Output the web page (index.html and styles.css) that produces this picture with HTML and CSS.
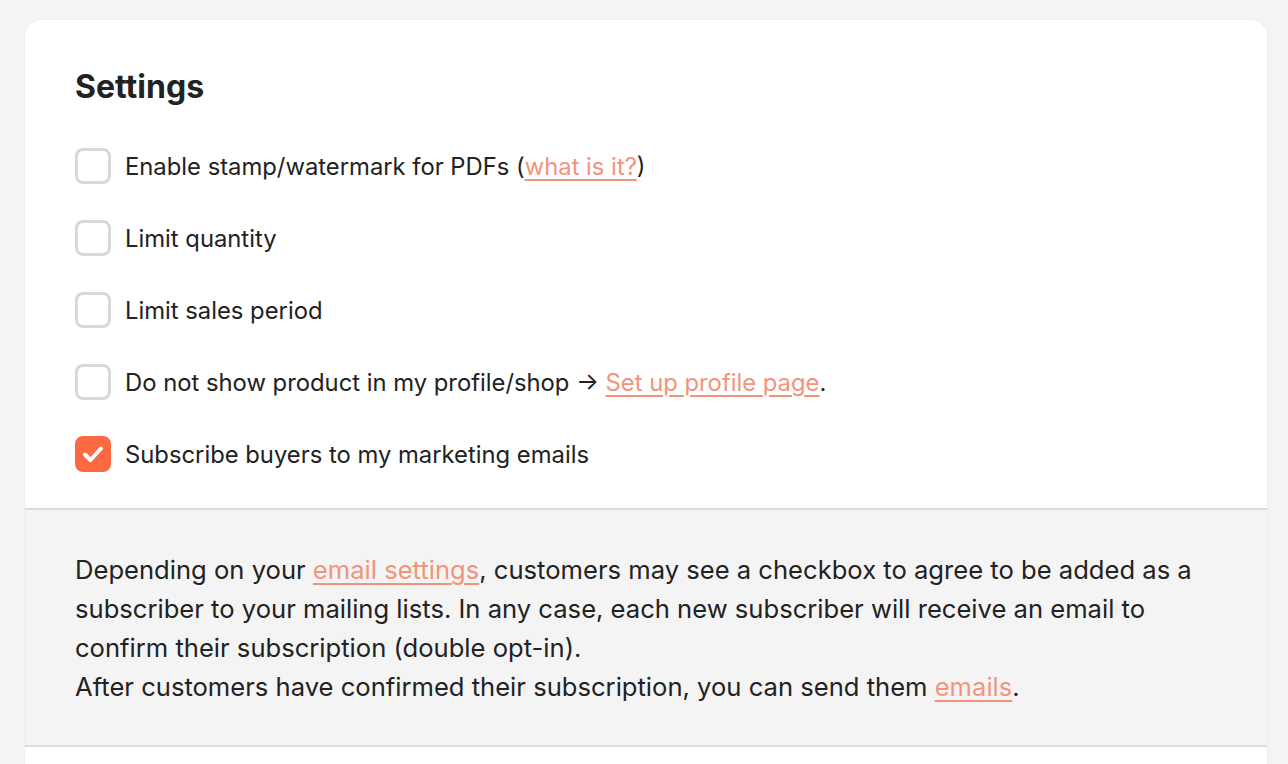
FILE: index.html
```html
<!DOCTYPE html>
<html lang="en">
<head>
<meta charset="utf-8">
<title>Settings</title>
<link rel="stylesheet" href="styles.css">
</head>
<body>
<main class="page">
  <section class="card">
    <div class="card-main">
      <h2 class="title">Settings</h2>
      <ul class="options">
        <li class="option"><span class="box"></span><span class="label">Enable stamp/watermark for PDFs (<a href="#" class="link">what is it?</a>)</span></li>
        <li class="option"><span class="box"></span><span class="label">Limit quantity</span></li>
        <li class="option"><span class="box"></span><span class="label">Limit sales period</span></li>
        <li class="option"><span class="box"></span><span class="label">Do not show product in my profile/shop → <a href="#" class="link">Set up profile page</a>.</span></li>
        <li class="option"><span class="box checked"><svg viewBox="0 0 36 36" width="36" height="36"><path d="M10 18.5 L15.5 24 L26 12.5" fill="none" stroke="#fff" stroke-width="4" stroke-linecap="round" stroke-linejoin="round"/></svg></span><span class="label">Subscribe buyers to my marketing emails</span></li>
      </ul>
    </div>
    <div class="note">
      <p>Depending on your <a href="#" class="link">email settings</a>, customers may see a checkbox to agree to be added as a subscriber to your mailing lists. In any case, each new subscriber will receive an email to confirm their subscription (double opt-in).<br>After customers have confirmed their subscription, you can send them <a href="#" class="link">emails</a>.</p>
    </div>
    <div class="card-rest"></div>
  </section>
</main>
</body>
</html>
```
FILE: styles.css
```css
html, body {
  margin: 0;
  padding: 0;
  background: #f4f4f4;
}
body {
  font-family: Inter, "Noto Sans", "Liberation Sans", sans-serif;
  color: #222222;
}
.page {
  padding: 20px 21px 0 25px;
}
.card {
  background: #ffffff;
  border-radius: 16px 16px 0 0;
  box-shadow: 0 0 2px rgba(0,0,0,0.08);
  overflow: hidden;
}
.card-main {
  padding: 48px 50px 36px;
}
.title {
  margin: 0 0 42px;
  font-size: 32px;
  line-height: 38px;
  font-weight: 700;
  color: #222222;
}
.options {
  list-style: none;
  margin: 0;
  padding: 0;
  display: flex;
  flex-direction: column;
  gap: 36px;
}
.option {
  display: flex;
  align-items: center;
  gap: 14px;
  height: 36px;
  font-size: 23.8px;
}
.box {
  width: 36px;
  height: 36px;
  box-sizing: border-box;
  border: 3px solid #d8d8d8;
  border-radius: 8px;
  flex: none;
  display: block;
}
.box.checked {
  background: #fd6a42;
  border-color: #fd6a42;
  position: relative;
}
.box.checked svg {
  position: absolute;
  left: -3px;
  top: -3px;
}
.link {
  color: #f2947b;
  text-decoration: underline;
  text-underline-offset: 4px;
  text-decoration-thickness: 1.5px;
}
.note {
  background: #f4f4f4;
  border-top: 2px solid #dcdcdc;
  border-bottom: 2px solid #dcdcdc;
  padding: 40px 50px 39px;
}
.note p {
  margin: 0;
  font-size: 25.6px;
  line-height: 39px;
}
.card-rest {
  height: 40px;
}
```
